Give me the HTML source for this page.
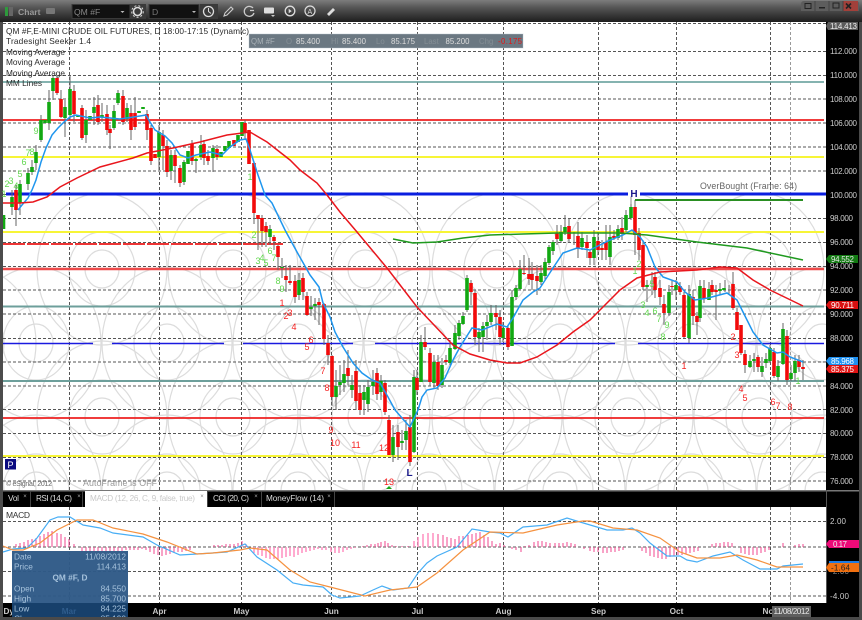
<!DOCTYPE html>
<html><head><meta charset="utf-8"><style>
html,body{margin:0;padding:0;background:#444;overflow:hidden}
svg{display:block;font-family:"Liberation Sans",sans-serif}
</style></head><body>
<svg width="862" height="620" viewBox="0 0 862 620" xmlns="http://www.w3.org/2000/svg">
<defs>
<linearGradient id="top" x1="0" y1="0" x2="0" y2="1"><stop offset="0" stop-color="#7d7d7d"/><stop offset=".35" stop-color="#555"/><stop offset="1" stop-color="#1d1d1d"/></linearGradient>
<clipPath id="c"><rect x="3" y="22" width="823" height="468"/></clipPath>
<clipPath id="t"><rect x="12" y="551" width="116" height="66"/></clipPath>
<g id="r" fill="none"><ellipse rx="17" ry="19"/><ellipse rx="33" ry="37"/><ellipse rx="65" ry="76"/></g>
<g id="row1"><use href="#r" x="102"/><use href="#r" x="233"/><use href="#r" x="365"/><use href="#r" x="497"/><use href="#r" x="628"/><use href="#r" x="759"/></g>
<g id="row2"><use href="#r" x="-29"/><use href="#r" x="36"/><use href="#r" x="167"/><use href="#r" x="298"/><use href="#r" x="429"/><use href="#r" x="560"/><use href="#r" x="691"/><use href="#r" x="822"/></g>
<g id="rings"><use href="#row1" y="269"/><use href="#row2" y="343"/><use href="#row1" y="417"/><use href="#row2" y="491"/></g>
</defs>

<rect width="862" height="620" fill="#4a4a4a"/>
<rect width="862" height="22" fill="url(#top)"/>
<!-- toolbar -->
<rect x="5" y="7" width="3" height="9" fill="#2e9a3c"/><rect x="9" y="7" width="4" height="9" fill="#666"/>
<text x="18" y="15" font-size="8.6" font-weight="bold" fill="#999">Chart</text>
<rect x="46" y="8" width="9" height="6" rx="1" fill="#777"/>
<rect x="72" y="4.500" width="58" height="14" fill="#111" stroke="#3a3a3a"/>
<text x="74" y="15" font-size="8.6" fill="#888">QM #F</text><path d="M120.500 11h4l-2 2z" fill="#bbb"/>
<rect x="130" y="4" width="16" height="15" fill="#3a3a3a"/>
<circle cx="137.500" cy="11.500" r="4" fill="none" stroke="#ddd" stroke-width="1.600"/><circle cx="137.500" cy="11.500" r="5.800" fill="none" stroke="#ddd" stroke-width="1" stroke-dasharray="2 2"/>
<rect x="149" y="4.500" width="50" height="14" fill="#111" stroke="#3a3a3a"/>
<text x="152" y="15" font-size="8.6" fill="#777">D</text><path d="M192 11h4l-2 2z" fill="#bbb"/>
<rect x="200" y="4" width="18" height="15" fill="#3a3a3a"/>
<circle cx="208.500" cy="11.500" r="5" fill="none" stroke="#ddd" stroke-width="1.300"/><path d="M208.500 8v3.500l2.500 2" fill="none" stroke="#ddd"/>
<path d="M224 16l1-3 6-6 2 2-6 6z" fill="none" stroke="#ccc" stroke-width="1.100"/>
<path d="M253 8a5 5 0 1 0 1 5M250 10.500h4" fill="none" stroke="#ccc" stroke-width="1.300"/>
<rect x="264" y="7.500" width="10" height="6" rx="1" fill="#ddd"/><path d="M271 15h4l-2 2z" fill="#ccc"/>
<circle cx="290" cy="11" r="4.800" fill="none" stroke="#ddd" stroke-width="1.300"/><path d="M288.700 8.800v4.500l3-2.200z" fill="#ddd"/>
<circle cx="310" cy="11" r="5" fill="none" stroke="#ddd" stroke-width="1.200"/><text x="307.500" y="14" font-size="7" fill="#ddd">A</text>
<path d="M327 14l3-3 3-3 2 2-6 6z" fill="#ddd"/>
<!-- window buttons -->
<path d="M801 11V4q0-3 3-3h52q3 0 3 3v7z" fill="#5d5d5d"/>
<rect x="843" y="1" width="15" height="10" fill="#a2403a"/>
<path d="M846 3.500l5 5M851 3.500l-5 5" stroke="#222" stroke-width="1.600"/>
<path d="M815 1v10M829 1v10M843 1v10" stroke="#444"/>
<rect x="805" y="3.500" width="6" height="5" fill="none" stroke="#222"/><rect x="819" y="7" width="6" height="1.500" fill="#222"/><rect x="833" y="3" width="6" height="5" fill="none" stroke="#222"/>

<!-- chart pane -->
<rect x="3" y="22" width="823" height="468" fill="#fff"/>
<rect x="0" y="22" width="3" height="598" fill="#4c4c4c"/>
<g clip-path="url(#c)">
<use href="#rings" stroke="#dcdcdc" stroke-width="1.200"/>
<g fill="none" stroke="#555" stroke-width="1" stroke-dasharray="3 2">
<path d="M3 23.500H826M3 51.500H826M3 75.500H826M3 99H826M3 123H826M3 147H826M3 171H826M3 194.500H826M3 218.500H826M3 242.500H826M3 266.500H826M3 290H826M3 314H826M3 338.500H826M3 362H826M3 386H826M3 409.500H826M3 433.500H826M3 457.500H826M3 481H826"/>
<path d="M69.500 22V490M159.500 22V490M241.500 22V490M331.500 22V490M417.500 22V490M503.500 22V490M598.500 22V490M676.500 22V490M770.500 22V490"/>
<path d="M790.500 22V490" stroke="#999"/>
</g>
<g fill="none">
<path d="M3 82H824" stroke="#5d9a95" stroke-width="1.500"/>
<path d="M3 120H824" stroke="#ee2020" stroke-width="1.800"/>
<path d="M3 157H824" stroke="#f7f536" stroke-width="2"/>
<path d="M6 194H826" stroke="#0a1ee0" stroke-width="3"/>
<path d="M3 232H824" stroke="#f7f536" stroke-width="2"/>
<path d="M3 244H283" stroke="#ee3535" stroke-width="2" stroke-dasharray="22 2"/>
<path d="M3 269H824" stroke="#ee4a4a" stroke-width="2.400"/>
<path d="M3 306.500H824" stroke="#6d9f9b" stroke-width="2"/>
<path d="M3 343.500H93M112 343.500H224M243 343.500H353M375 343.500H615M638 343.500H824" stroke="#1a1ae0" stroke-width="1.500"/>
<path d="M3 381H824" stroke="#6d9f9b" stroke-width="2"/>
<path d="M3 418H824" stroke="#ee2020" stroke-width="1.800"/>
<path d="M3 456H824" stroke="#f7f536" stroke-width="2"/>
</g>
<!-- wicks -->
<path fill="none" stroke="#666" stroke-width="1" d="M12 190V215M16 185V226M20 180V215M28 168V190M32 160V175M36 145V170M41 115V142M49 90V130M53 75V100M57 75V95M61 90V118M65 100V137M70 75V120M74 85V122M82 105V140M86 110V143M94 97V125M98 95V125M102 103V122M107 105V135M110 125V149M114 105V130M118 90V105M123 90V125M127 103V122M131 105V140M135 97V130M147 110V140M151 125V165M159 125V170M163 130V170M167 140V177M171 150V180M175 150V183M180 165V187M184 160V185M192 140V165M196 158V173M201 135V160M204 140V165M208 150V165M213 145V172M217 145V160M245 120V140M254 163V224M258 215V250M262 215V247M266 222V247M270 225V245M274 235V250M278 245V270M282 258V278M286 265V292M290 265V285M295 275V303M299 273V300M303 273V300M307 292V316M311 296V316M315 298V320M319 298V325M324 303V345M328 335V365M332 355V406M336 370V410M340 365V395M344 360V392M348 350V385M352 375V398M356 360V410M360 385V415M364 385V415M368 380V412M373 370V395M377 368V400M381 375V400M385 380V415M389 415V455M393 425V462M398 425V460M402 430V450M406 420V450M410 415V466M414 370V453M417 370V395M421 335V382M425 327V350M430 348V386M434 355V388M438 355V390M442 358V388M446 355V365M450 340V365M455 325V350M459 320V340M463 312V325M467 275V312M471 280V305M475 290V345M479 328V352M483 322V352M487 315V340M491 305V325M496 305V330M500 310V345M503 322V342M508 325V350M512 290V346M516 285V300M520 260V290M524 255V275M529 258V285M532 262V290M537 265V295M541 265V285M545 258V280M549 245V265M553 240V255M557 225V245M561 225V243M565 215V235M569 218V243M574 232V245M578 222V258M582 232V250M587 235V258M590 250V265M594 230V265M598 232V255M602 240V260M606 225V260M610 225V265M614 230V240M618 225V240M622 217V240M626 210V232M631 200V220M635 200V255M639 228V260M643 240V290M647 280V302M652 272V295M655 272V298M660 280V305M664 295V325M669 285V316M672 280V295M676 280V300M680 282V295M684 292V338M689 285V343M693 290V325M697 312V335M700 280V322M704 280V303M709 282V300M712 280V295M716 285V320M720 283V295M725 280V292M729 285V295M733 272V310M737 308V330M741 325V355M745 350V373M750 355V368M754 353V372M758 355V372M762 357V377M766 353V368M770 345V362M774 348V378M778 360V381M783 323V365M787 330V385M791 365V381M795 355V381M799 355V372M803 360V380"/>
<!-- green bodies -->
<path fill="none" stroke="#12a812" stroke-width="3.600" d="M3.500 215V229M12 197V207M20 184V203M28 173V184M32 167V172M36 152V163M41 120V140M45 120V123M49 102V123M53 78V91M65 107V118M70 89V115M78 115V117M86 120V135M90 116V120M94 107V113M102 115V117M114 111V128M118 93V103M127 108V119M139 111V113M143 107V109M159 132V157M171 155V171M184 162V182M188 151V164M196 159V161M201 145V157M213 148V158M221 152V157M225 146V151M229 141V148M238 135V142M242 122V136M270 229V237M282 267V268M299 280V295M311 307V309M315 304V306M336 386V397M340 382V385M344 374V383M352 385V390M364 392V400M368 387V404M373 382V386M381 381V392M393 437V455M402 441V443M406 431V440M414 377V452M421 342V382M434 362V383M442 365V385M450 348V363M455 333V349M459 323V336M463 316V324M467 278V310M479 332V338M483 326V337M487 322V326M491 313V322M503 328V338M512 297V346M516 288V297M520 269V289M541 273V282M545 262V276M549 247V263M553 242V251M561 232V241M565 227V232M582 238V247M594 237V258M610 237V257M618 229V238M626 215V230M631 207V218M647 285V287M669 292V313M676 285V290M689 294V338M700 286V318M709 289V300M720 289V291M724 288V290M750 361V367M754 359V361M762 366V372M766 359V363M770 348V361M778 366V377M783 329V364M791 373V379M795 361V373"/>
<!-- red bodies -->
<path fill="none" stroke="#f20a0a" stroke-width="3.600" d="M16 190V210M57 78V93M61 99V117M74 91V114M82 108V138M98 105V122M107 114V130M110 129V133M123 96V122M131 113V130M135 113V127M147 114V130M151 128V161M155 154V158M163 135V146M167 146V172M175 155V166M180 168V183M192 144V161M204 144V158M208 156V161M217 149V157M234 140V146M245 123V132M249 130V164M254 163V213M258 215V219M262 218V231M266 226V232M274 237V241M278 246V257M286 276V280M290 281V283M295 281V297M303 278V292M307 296V315M319 302V305M324 304V339M328 343V355M332 356V397M348 368V376M356 371V401M360 393V410M377 373V394M385 383V412M389 420V455M398 432V447M410 427V462M417 378V390M425 342V347M430 353V382M438 362V386M446 360V362M471 283V292M475 293V337M496 313V317M500 317V337M508 328V347M524 273V274M529 274V279M532 274V280M537 276V281M557 233V239M569 226V239M578 236V249M587 242V248M590 252V258M598 241V250M602 248V250M606 242V250M614 236V238M622 228V234M635 207V235M639 233V250M643 245V287M655 277V290M660 288V297M664 304V313M672 286V287M680 286V292M684 295V337M693 297V316M697 316V322M704 288V299M712 285V292M716 290V292M733 284V308M737 312V330M741 325V353M745 354V365M758 357V367M774 352V376M787 336V380M799 360V367M803 367V369"/>
<!-- moving averages -->
<polyline fill="none" stroke="#1f96ee" stroke-width="1.500" points="18,210 22,205 28,198 32,190 36,180 41,162 46,148 52,135 58,128 64,122 70,117 76,115 90,118 100,117 120,119 140,116 146,115 150,122 155,130 165,136 172,143 180,155 188,158 196,155 210,152 222,155 230,147 240,140 246,139 250,150 258,175 265,195 272,203 285,230 297,252 310,275 319,287 323,303 330,317 335,332 343,347 353,363 362,373 372,380 380,383 388,397 395,410 402,418 410,427 418,410 422,397 427,390 437,388 445,378 453,360 460,347 472,328 482,330 497,324 507,327 513,318 523,300 533,292 540,288 553,268 563,253 577,248 590,250 610,240 623,235 632,230 640,237 647,247 655,267 663,277 677,282 685,292 695,300 708,298 727,293 737,300 743,312 753,332 763,345 777,353 783,352 790,357 803,362"/>
<polyline fill="none" stroke="#e9161d" stroke-width="1.500" points="3,203 20,203 33,202 47,197 60,187 77,178 100,167 133,158 147,153 173,148 200,142 227,135 250,132 267,142 290,160 300,170 317,183 327,195 340,212 357,232 387,268 417,307 453,345 470,354 490,360 507,363 520,363 537,357 557,345 573,332 590,320 600,310 620,290 637,278 660,272 697,270 720,267 737,268 753,280 770,290 803,306"/>
<polyline fill="none" stroke="#1f9a1f" stroke-width="1.500" points="393,239 413,243 437,242 463,238 490,235 523,234 557,233 620,233 647,235 697,242 747,248 803,260"/>
<path d="M635 200H803" stroke="#2a8f22" stroke-width="2" fill="none"/>
<path d="M631 194V204" stroke="#888" fill="none"/>
<path d="M386 489l3-3 3 3z" fill="#16a616"/>
</g>
<rect x="628" y="192" width="12" height="4.500" fill="#fff"/>
<!-- seeker numbers -->
<g font-size="9" text-anchor="middle" fill="#62d850">
<text x="4" y="197">1</text><text x="7" y="187">2</text><text x="11" y="184">3</text><text x="16" y="189">4</text><text x="20" y="177">5</text><text x="24" y="165">6</text><text x="28" y="156">7</text><text x="32" y="155">8</text><text x="36" y="134">9</text>
<text x="250" y="180">1</text><text x="254" y="238">2</text><text x="258" y="264">3</text><text x="262" y="261">4</text><text x="266" y="266">5</text><text x="270" y="254">6</text><text x="274" y="261">7</text><text x="278" y="284">8</text><text x="282" y="292">9</text>
<text x="635" y="274">1</text><text x="639" y="267">2</text><text x="643" y="308">3</text><text x="647" y="316">4</text><text x="652" y="287">5</text><text x="655" y="314">6</text><text x="659" y="322">7</text><text x="663" y="340">8</text><text x="667" y="328">9</text><text x="798" y="384">1</text>
</g>
<g font-size="9" text-anchor="middle" fill="#f52020">
<text x="282" y="306">1</text><text x="286" y="319">2</text><text x="290" y="316">3</text><text x="294" y="330">4</text><text x="307" y="350">5</text><text x="311" y="343">6</text><text x="323" y="374">7</text><text x="327" y="391">8</text><text x="331" y="433">9</text><text x="335" y="446">10</text><text x="356" y="448">11</text><text x="384" y="451">12</text><text x="389" y="485">13</text>
<text x="684" y="369">1</text><text x="733" y="340">2</text><text x="737" y="358">3</text><text x="741" y="392">4</text><text x="745" y="401">5</text><text x="773" y="405">6</text><text x="778" y="409">7</text><text x="790" y="410">8</text>
</g>
<text x="634" y="197" font-size="10" font-weight="bold" fill="#1a1a8c" text-anchor="middle">H</text>
<text x="409.500" y="476" font-size="10" font-weight="bold" fill="#1a1a8c" text-anchor="middle">L</text>
<!-- legend -->
<g font-size="8.300" fill="#2a2a2a">
<text x="6" y="34" textLength="243">QM #F,E-MINI CRUDE OIL FUTURES, D  18:00-17:15 (Dynamic)</text>
<text x="6" y="44" textLength="85">Tradesight Seeker 1.4</text>
<text x="6" y="55" textLength="59">Moving Average</text>
<text x="6" y="65" textLength="59">Moving Average</text>
<text x="6" y="76" textLength="59">Moving Average</text>
<text x="6" y="86" textLength="36">MM Lines</text>
</g>
<text x="700" y="189" font-size="8.800" fill="#666" textLength="97">OverBought (Frame: 64)</text>
<text x="83" y="486" font-size="8.800" fill="#9a9a9a" textLength="74">AutoFrame is OFF</text>
<text x="6" y="486" font-size="7" fill="#666" textLength="46">© eSignal, 2012</text>
<rect x="5" y="459" width="11" height="10.500" fill="#0a0a80"/>
<text x="7.500" y="468" font-size="9" fill="#fff">P</text>
<!-- quote box -->
<rect x="249" y="34" width="274" height="14" fill="#6b7882" stroke="#b7c4cc" stroke-opacity=".4"/>
<g font-size="7.800">
<text x="251" y="44" fill="#a8b0b6">QM #F</text><text x="286" y="44" fill="#848e95">O</text>
<text x="296" y="44" fill="#ddd" textLength="24">85.400</text><text x="331" y="44" fill="#848e95">Hi</text>
<text x="342" y="44" fill="#ddd" textLength="24">85.400</text><text x="376" y="44" fill="#848e95">Lo</text>
<text x="391" y="44" fill="#ddd" textLength="24">85.175</text><text x="424" y="44" fill="#848e95">Last</text>
<text x="445.500" y="44" fill="#ddd" textLength="24">85.200</text><text x="479" y="44" fill="#848e95">Chg</text>
<text x="498" y="44" fill="#e01818" textLength="24">-0.175</text>
</g>

<!-- price axis -->
<rect x="826" y="22" width="33" height="581" fill="#000"/>
<path d="M828 22h30v8h-30l-2-4z" fill="#5b5b5b"/>
<g font-size="8" fill="#ccc">
<text x="830" y="29" fill="#eee" textLength="27">114.413</text>
<text x="830" y="54" textLength="27">112.000</text><text x="830" y="78" textLength="27">110.000</text><text x="830" y="102" textLength="27">108.000</text><text x="830" y="126" textLength="27">106.000</text><text x="830" y="150" textLength="27">104.000</text><text x="830" y="174" textLength="27">102.000</text><text x="830" y="198" textLength="27">100.000</text>
<text x="830" y="221" textLength="23">98.000</text><text x="830" y="245" textLength="23">96.000</text><text x="830" y="269" textLength="23">94.000</text><text x="830" y="293" textLength="23">92.000</text><text x="830" y="317" textLength="23">90.000</text><text x="830" y="341" textLength="23">88.000</text><text x="830" y="365" textLength="23">86.000</text><text x="830" y="389" textLength="23">84.000</text><text x="830" y="413" textLength="23">82.000</text><text x="830" y="436" textLength="23">80.000</text><text x="830" y="460" textLength="23">78.000</text><text x="830" y="484" textLength="23">76.000</text>
</g>
<path d="M829 255h29v8h-29l-3-4z" fill="#137a13"/>
<text x="831" y="262" font-size="8" fill="#e6e6e6" textLength="23">94.552</text>
<path d="M829 301h29v8h-29l-3-4z" fill="#d81010"/>
<text x="831" y="308" font-size="8" fill="#fff" textLength="23">90.711</text>
<path d="M829 357h29v8h-29l-3-4z" fill="#1e90f0"/>
<text x="831" y="364" font-size="8" fill="#fff" textLength="23">85.968</text>
<path d="M829 365h29v8h-29l-3-4z" fill="#e01414"/>
<text x="831" y="372" font-size="8" fill="#fff" textLength="23">85.375</text>

<!-- tabs -->
<rect x="3" y="490" width="856" height="1.500" fill="#777"/>
<rect x="3" y="491.500" width="856" height="15.500" fill="#000"/>
<rect x="85" y="491" width="122" height="16" fill="#fff"/>
<path d="M30.500 491V507M82.500 491V507M207.500 491V507M261.500 491V507M334.500 491V507" stroke="#444"/>
<g font-size="8.200" fill="#ddd">
<text x="8" y="501" textLength="11">Vol</text>
<text x="36" y="501" textLength="36">RSI (14, C)</text>
<text x="90" y="501" fill="#c9c9c9" textLength="105">MACD (12, 26, C, 9, false, true)</text>
<text x="213" y="501" textLength="36">CCI (20, C)</text>
<text x="266" y="501" textLength="58">MoneyFlow (14)</text>
</g>
<g font-size="6" fill="#aaa" text-anchor="middle"><text x="25" y="498">×</text><text x="79" y="498">×</text><text x="202" y="498" fill="#888">×</text><text x="256" y="498">×</text><text x="329" y="498">×</text></g>

<!-- MACD pane -->
<rect x="3" y="507" width="823" height="96" fill="#fff"/>
<rect x="826" y="507" width="33" height="96" fill="#000"/>
<path d="M826.500 490V603" stroke="#555"/>
<g fill="none" stroke="#555" stroke-dasharray="3 2">
<path d="M3 521.500H826M3 547H826M3 571.500H826M3 596H826" />
<path d="M69.500 507V603M159.500 507V603M241.500 507V603M331.500 507V603M417.500 507V603M503.500 507V603M598.500 507V603M676.500 507V603M770.500 507V603"/>
<path d="M790.500 507V603" stroke="#999"/>
</g>
<path fill="none" stroke="#f2478f" stroke-width="1" d="M16 547V544M20 547V543M24 547V542M28 547V540M32 547V539M36 547V538M40 547V536M44 547V534M48 547V532M52 547V531M57 547V533M61 547V534M65 547V537M69 547V539M74 547V544M82 547V552M86 547V552M90 547V552M94 547V552M98 547V552M102 547V552M106 547V552M110 547V552M114 547V551M118 547V551M122 547V551M126 547V550M130 547V550M134 547V550M138 547V550M142 547V549M146 547V550M150 547V552M154 547V554M158 547V555M162 547V556M166 547V555M170 547V554M174 547V553M178 547V552M182 547V552M186 547V551M190 547V550M214 547V545M218 547V545M222 547V545M226 547V544M230 547V544M234 547V544M238 547V543M242 547V541M246 547V544"/>
<path fill="none" stroke="#ff8fc0" stroke-width="1.500" d="M254 547V553M258 547V555M262 547V556M266 547V558M270 547V559M274 547V559M278 547V559M282 547V558M286 547V557M290 547V556M294 547V557M298 547V555M302 547V553M306 547V552M310 547V551M314 547V550M318 547V549M322 547V550M326 547V550M331 547V552M335 547V553M339 547V553M343 547V552M347 547V550M351 547V549M355 547V548"/>
<path fill="none" stroke="#f2478f" stroke-width="1" d="M363 547V546M367 547V545M371 547V544M375 547V544M378 547V543M381 547V542M385 547V541M388 547V543M392 547V545M396 547V546M402 547V546M408 547V546"/>
<path fill="none" stroke="#ff8fc0" stroke-width="1.500" d="M414 547V541M418 547V537M423 547V534M428 547V533M433 547V533"/>
<path fill="none" stroke="#f2478f" stroke-width="1" d="M438 547V534M443 547V535M447 547V537M451 547V538M455 547V539M459 547V536M463 547V536M468 547V535M472 547V534M476 547V533M480 547V532M484 547V535M488 547V537M492 547V541M496 547V544M500 547V543M504 547V545M512 547V549M516 547V550M521 547V552M525 547V546M529 547V545M534 547V542M538 547V541M542 547V541M546 547V542M550 547V543M555 547V543M559 547V543M563 547V543M567 547V542M571 547V543M575 547V544M584 547V549M590 547V551M594 547V552M598 547V552M603 547V553M607 547V553M611 547V552M615 547V552M619 547V551M623 547V550M642 547V551M646 547V553M650 547V556M654 547V557M658 547V558M662 547V559M666 547V559M670 547V557M674 547V556M678 547V555M682 547V555M686 547V554M690 547V553M694 547V552M698 547V551M712 547V544M716 547V543M720 547V543M724 547V542M728 547V542M732 547V543M741 547V553M745 547V554M749 547V555M753 547V555M757 547V555M761 547V553M765 547V552M769 547V550M783 547V543M795 547V545M799 547V544M803 547V544"/>
<polyline fill="none" stroke="#48aef5" stroke-width="1.200" points="3,552 13,549 27,548 37,538 50,520 58,517 70,517 83,525 100,528 113,533 143,537 157,545 180,555 197,554 227,552 245,544 257,557 277,570 293,583 303,585 323,587 332,595 340,598 360,596 373,590 382,586 393,590 408,588 418,573 427,563 437,556 457,547 472,529 490,532 500,533 508,537 523,527 547,525 567,518 580,522 607,530 623,530 632,528 640,533 650,543 667,556 680,556 687,560 697,562 713,556 730,552 743,560 760,569 777,569 783,566 803,564"/>
<polyline fill="none" stroke="#f59240" stroke-width="1.200" points="3,546 13,550 23,550 40,543 57,530 77,520 93,520 113,528 143,534 167,542 197,554 213,553 240,550 250,548 267,550 290,570 310,582 330,587 365,596 390,590 417,587 437,573 463,550 490,532 523,533 557,525 583,521 590,521 613,528 637,530 660,538 680,552 697,558 720,558 737,555 757,560 777,567 803,567"/>
<text x="6" y="518" font-size="8.500" fill="#333" textLength="24">MACD</text>
<g font-size="8" fill="#ccc">
<text x="830" y="524" textLength="16">2.00</text><text x="830" y="574" fill="#888" textLength="19">-2.00</text><text x="830" y="599" textLength="19">-4.00</text>
</g>
<path d="M829 540h30v8h-30l-3-4z" fill="#ee0a78"/>
<text x="833" y="547" font-size="8" fill="#eee" textLength="14">0.17</text>
<path d="M829 561h30v5h-30z" fill="#1e7be0"/>
<path d="M829 563h30v9h-30l-3-4.500z" fill="#f07010"/>
<text x="831" y="570.500" font-size="8" fill="#222" textLength="19">-1.64</text>

<!-- time axis -->
<rect x="3" y="603" width="856" height="14" fill="#000"/>
<g font-size="8.200" font-weight="bold" fill="#c8c8c8" text-anchor="middle">
<text x="159.500" y="614">Apr</text><text x="241.500" y="614">May</text><text x="331.500" y="614">Jun</text><text x="417.500" y="614">Jul</text><text x="503.500" y="614">Aug</text><text x="598.500" y="614">Sep</text><text x="676.500" y="614">Oct</text><text x="768" y="614">No</text>
</g>
<text x="3.500" y="614" font-size="8.200" font-weight="bold" fill="#ccc">Dy</text>
<rect x="772" y="606" width="39" height="11" fill="#5e5e5e"/>
<text x="773.500" y="614" font-size="8.200" fill="#e8e8e8" textLength="36">11/08/2012</text>

<!-- tooltip -->
<g clip-path="url(#t)">
<rect x="12" y="551" width="116" height="52" fill="#2f5a87" fill-opacity=".97"/>
<rect x="12" y="603" width="116" height="14" fill="#17406b"/>
<text x="69" y="614" text-anchor="middle" font-size="8.200" font-weight="bold" fill="#2f5c8c">Mar</text>
<g font-size="8.300" fill="#a6c2dc">
<text x="14" y="559.500">Date</text><text x="14" y="569.500">Price</text><text x="14" y="591.500">Open</text><text x="14" y="601.500">High</text><text x="14" y="611.500">Low</text><text x="14" y="621.500">Close</text>
<g text-anchor="end"><text x="126" y="559.500">11/08/2012</text><text x="126" y="569.500">114.413</text><text x="126" y="591.500">84.550</text><text x="126" y="601.500">85.700</text><text x="126" y="611.500">84.225</text><text x="126" y="621.500">85.190</text></g>
<text x="70" y="580.500" text-anchor="middle" font-weight="bold">QM #F, D</text>
</g>
</g>
<rect x="859" y="22" width="3" height="598" fill="#4a4a4a"/>
<rect x="0" y="617" width="862" height="3" fill="#4a4a4a"/>
</svg>
</body></html>
